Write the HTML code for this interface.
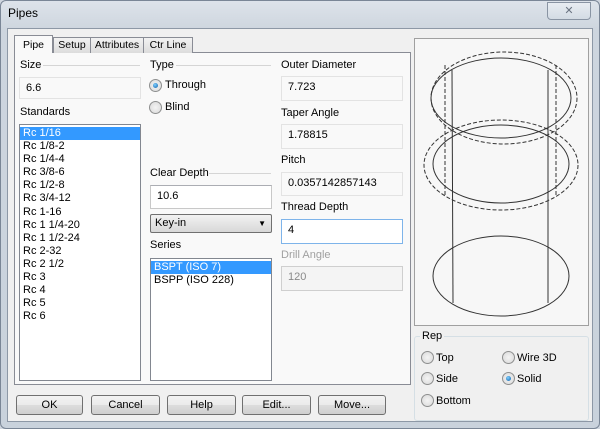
<!DOCTYPE html>
<html><head><style>
*{margin:0;padding:0;box-sizing:border-box}
body{width:600px;height:429px;background:#cfd6df;font-family:"Liberation Sans",sans-serif;font-size:11px;color:#000;position:relative;overflow:hidden}
.a{position:absolute}
.win{left:0;top:0;width:600px;height:429px;background:linear-gradient(#dde3ea,#cdd5de 30px,#c9d2dc);border:1px solid #7a8696;border-radius:6px}
.client{left:7px;top:28px;width:586px;height:394px;background:#f0f0f0;border:1px solid #8d98a6}
.fld{position:absolute;background:#fff;border:1px solid #c8c8c8;border-top-color:#abadb3;padding:4px 0 0 6px;font-size:11px}
.lbl{position:absolute;font-size:11px;color:#000}
.sep{position:absolute;height:1px;background:#d5d5d5}
.list{position:absolute;background:#fff;border:1px solid #828790}
.list div{height:13.1px;line-height:13px;padding-left:3px;font-size:11px}
.sel{background:#3399ff;color:#fff}
.btn{position:absolute;height:20px;border:1px solid #707070;border-radius:3px;background:linear-gradient(#f2f2f2,#ebebeb 50%,#dddddd 51%,#cfcfcf);text-align:center;line-height:18px;font-size:11px}
.rad{position:absolute;width:13px;height:13px;border-radius:50%;border:1px solid #8e8f8f;background:radial-gradient(#f4f4f4,#d8d8d8)}
.rad.on::after{content:"";position:absolute;left:3px;top:3px;width:5px;height:5px;border-radius:50%;background:radial-gradient(circle at 40% 35%,#7fd0ff,#0e5ea8)}
.tab{position:absolute;top:37px;height:16px;border:1px solid #898c95;border-bottom:none;background:linear-gradient(#f2f2f2,#dcdcdc);font-size:10.5px;padding:1px 0 0;text-align:center}
</style></head><body>
<div class="a win"></div>
<div class="a" style="left:8px;top:6px;font-size:12px;color:#000">Pipes</div>
<div class="a" style="left:547px;top:2px;width:44px;height:18px;border:1px solid #8994a3;border-radius:0 0 4px 4px;background:linear-gradient(#e8edf2,#d3dbe4);text-align:center;font-size:11px;line-height:16px;color:#6a7482">✕</div>
<div class="a client"></div>
<div class="a" style="left:14px;top:52px;width:397px;height:333px;border:1px solid #898c95;background:#f9f9f9"></div>
<div class="tab" style="left:53px;width:38px">Setup</div>
<div class="tab" style="left:90px;width:54px">Attributes</div>
<div class="tab" style="left:143px;width:50px">Ctr Line</div>
<div class="tab" style="left:14px;top:35px;width:39px;height:18px;background:#f9f9f9;padding-top:3px">Pipe</div>

<div class="lbl" style="left:20px;top:59px">Size</div><div class="sep" style="left:43px;top:65px;width:97px"></div>
<div class="fld" style="left:19px;top:77px;width:122px;height:22px;background:#f9f9f9;border-color:#e3e3e3">6.6</div>
<div class="lbl" style="left:20px;top:106px">Standards</div>
<div class="list" style="left:19px;top:124px;width:122px;height:257px;padding-top:2px">
<div class="sel">Rc 1/16</div><div>Rc 1/8-2</div><div>Rc 1/4-4</div><div>Rc 3/8-6</div><div>Rc 1/2-8</div><div>Rc 3/4-12</div><div>Rc 1-16</div><div>Rc 1 1/4-20</div><div>Rc 1 1/2-24</div><div>Rc 2-32</div><div>Rc 2 1/2</div><div>Rc 3</div><div>Rc 4</div><div>Rc 5</div><div>Rc 6</div></div>

<div class="lbl" style="left:150px;top:59px">Type</div><div class="sep" style="left:176px;top:65px;width:95px"></div>
<div class="rad on" style="left:149px;top:79px"></div><div class="lbl" style="left:165px;top:79px">Through</div>
<div class="rad" style="left:149px;top:101px"></div><div class="lbl" style="left:165px;top:101px">Blind</div>
<div class="lbl" style="left:150px;top:167px">Clear Depth</div><div class="sep" style="left:209px;top:173px;width:62px"></div>
<div class="fld" style="left:150px;top:185px;width:122px;height:24px">10.6</div>
<div class="a" style="left:150px;top:214px;width:122px;height:19px;border:1px solid #707070;border-radius:2px;background:linear-gradient(#f2f2f2,#d8d8d8);padding:2px 0 0 4px">Key-in<span style="position:absolute;right:5px;top:4px;font-size:8px">▼</span></div>
<div class="lbl" style="left:150px;top:239px">Series</div>
<div class="list" style="left:150px;top:258px;width:122px;height:123px;padding-top:2px"><div class="sel">BSPT (ISO 7)</div><div>BSPP (ISO 228)</div></div>

<div class="lbl" style="left:281px;top:59px">Outer Diameter</div>
<div class="fld" style="left:281px;top:76px;width:122px;height:25px;background:#f9f9f9;border-color:#e3e3e3">7.723</div>
<div class="lbl" style="left:281px;top:107px">Taper Angle</div>
<div class="fld" style="left:281px;top:124px;width:122px;height:25px;background:#f9f9f9;border-color:#e3e3e3">1.78815</div>
<div class="lbl" style="left:281px;top:154px">Pitch</div>
<div class="fld" style="left:281px;top:172px;width:122px;height:24px;background:#f9f9f9;border-color:#e3e3e3">0.0357142857143</div>
<div class="lbl" style="left:281px;top:201px">Thread Depth</div>
<div class="fld" style="left:281px;top:219px;width:122px;height:25px;border-color:#7eb4ea">4</div>
<div class="lbl" style="left:281px;top:249px;color:#a0a0a0">Drill Angle</div>
<div class="fld" style="left:281px;top:266px;width:122px;height:25px;background:#f4f4f4;border-color:#cfcfcf;color:#8a8a8a">120</div>

<div class="a" style="left:414px;top:38px;width:175px;height:288px;border:1px solid #a0a0a0;background:#f7f7f7"></div>
<svg class="a" style="left:0;top:0" width="600" height="429" fill="none" stroke-width="1">
<g stroke="#333">
<ellipse cx="501" cy="98" rx="70" ry="40"/>
<ellipse cx="501" cy="164" rx="68" ry="39"/>
<ellipse cx="501" cy="276" rx="68" ry="40"/>
<line x1="452" y1="70" x2="453" y2="303"/><line x1="548" y1="70" x2="548" y2="303"/>
</g>
<g stroke="#333" stroke-dasharray="4,2">
<ellipse cx="504" cy="98" rx="73" ry="46"/>
<ellipse cx="501" cy="165" rx="77" ry="45"/>
<line x1="445" y1="65" x2="445" y2="197"/><line x1="556" y1="65" x2="556" y2="197"/>
</g>
</svg>

<div class="a" style="left:414px;top:336px;width:175px;height:85px;border:1px solid #d5dfe5;border-radius:3px"></div>
<div class="lbl" style="left:420px;top:330px;background:#f0f0f0;padding:0 2px">Rep</div>
<div class="rad" style="left:421px;top:351px"></div><div class="lbl" style="left:436px;top:352px">Top</div>
<div class="rad" style="left:421px;top:372px"></div><div class="lbl" style="left:436px;top:373px">Side</div>
<div class="rad" style="left:421px;top:394px"></div><div class="lbl" style="left:436px;top:395px">Bottom</div>
<div class="rad" style="left:502px;top:351px"></div><div class="lbl" style="left:517px;top:352px">Wire 3D</div>
<div class="rad on" style="left:502px;top:372px"></div><div class="lbl" style="left:517px;top:373px">Solid</div>

<div class="btn" style="left:16px;top:395px;width:67px">OK</div>
<div class="btn" style="left:91px;top:395px;width:69px">Cancel</div>
<div class="btn" style="left:167px;top:395px;width:69px">Help</div>
<div class="btn" style="left:242px;top:395px;width:69px">Edit...</div>
<div class="btn" style="left:318px;top:395px;width:68px">Move...</div>
</body></html>
